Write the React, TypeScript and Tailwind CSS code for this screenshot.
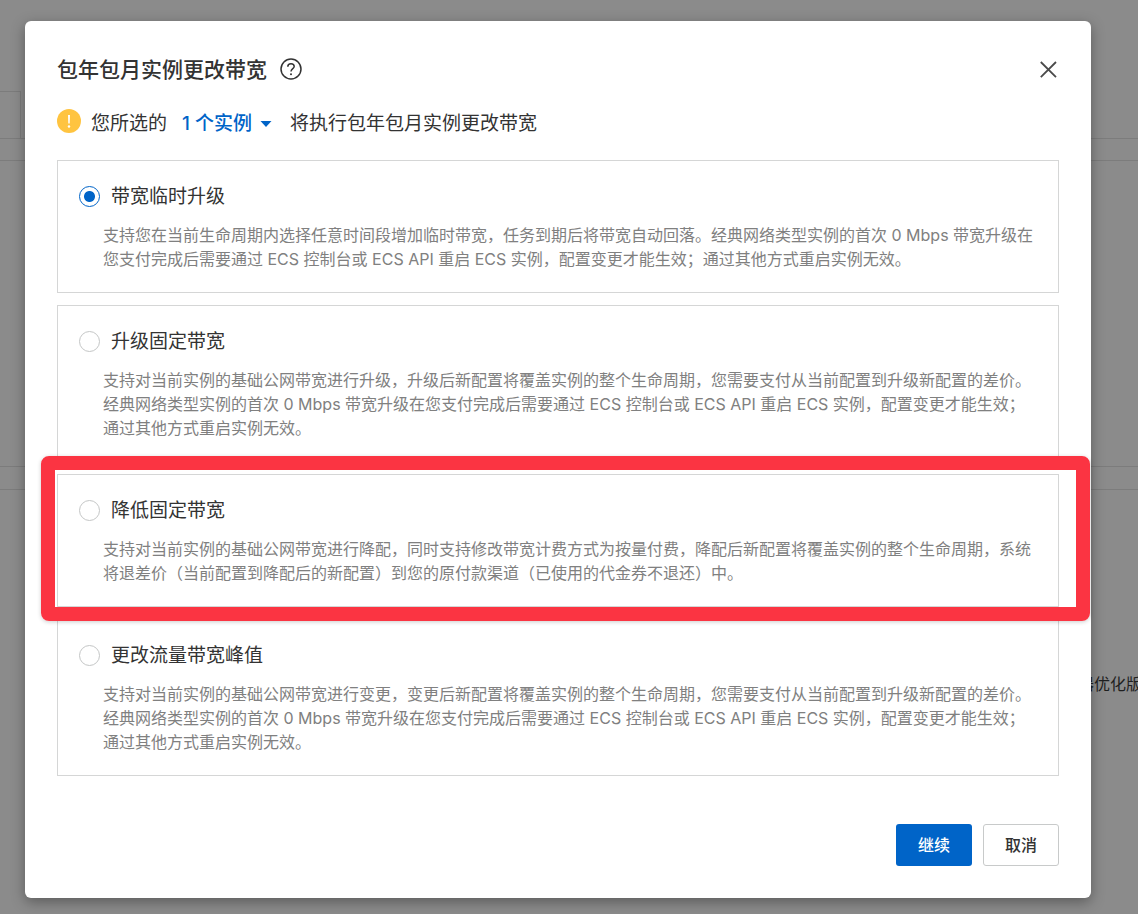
import React, { useState } from "react";

type Option = { id: string; title: string; lines: string[]; highlighted?: boolean };

const options: Option[] = [
  {
    id: "temp",
    title: "带宽临时升级",
    lines: [
      "支持您在当前生命周期内选择任意时间段增加临时带宽，任务到期后将带宽自动回落。经典网络类型实例的首次 0 Mbps 带宽升级在",
      "您支付完成后需要通过 ECS 控制台或 ECS API 重启 ECS 实例，配置变更才能生效；通过其他方式重启实例无效。",
    ],
  },
  {
    id: "upgrade",
    title: "升级固定带宽",
    lines: [
      "支持对当前实例的基础公网带宽进行升级，升级后新配置将覆盖实例的整个生命周期，您需要支付从当前配置到升级新配置的差价。",
      "经典网络类型实例的首次 0 Mbps 带宽升级在您支付完成后需要通过 ECS 控制台或 ECS API 重启 ECS 实例，配置变更才能生效；",
      "通过其他方式重启实例无效。",
    ],
  },
  {
    id: "downgrade",
    title: "降低固定带宽",
    highlighted: true,
    lines: [
      "支持对当前实例的基础公网带宽进行降配，同时支持修改带宽计费方式为按量付费，降配后新配置将覆盖实例的整个生命周期，系统",
      "将退差价（当前配置到降配后的新配置）到您的原付款渠道（已使用的代金券不退还）中。",
    ],
  },
  {
    id: "peak",
    title: "更改流量带宽峰值",
    lines: [
      "支持对当前实例的基础公网带宽进行变更，变更后新配置将覆盖实例的整个生命周期，您需要支付从当前配置到升级新配置的差价。",
      "经典网络类型实例的首次 0 Mbps 带宽升级在您支付完成后需要通过 ECS 控制台或 ECS API 重启 ECS 实例，配置变更才能生效；",
      "通过其他方式重启实例无效。",
    ],
  },
];

function PageBehind() {
  return (
    <div className="absolute inset-0 flex flex-col overflow-hidden bg-[#8b8b8b]" aria-hidden="true">
      <div className="h-[91px]" />
      <div className="h-12 w-[21px] border-y border-r border-[#7c7c7c]" />
      <div className="-mt-px h-[23px] border-y border-[#7c7c7c]" />
      <div className="h-[305px]" />
      <div className="h-6 border-y border-[#7c7c7c]" />
      <div className="mt-[182px] flex justify-end text-base leading-6 text-[#1f1f1f]">
        <span className="-mr-1 whitespace-nowrap">服务器优化版</span>
      </div>
    </div>
  );
}

function OptionCard({ option, checked, onSelect }: { option: Option; checked: boolean; onSelect: () => void }) {
  return (
    <div className="relative border border-[#d5d6d6] px-[21px] py-[21px]">
      <label className="flex h-7 items-center gap-[11px] text-[19px] leading-7 text-[#333]">
        <input
          type="radio"
          name="bandwidth"
          checked={checked}
          onChange={onSelect}
          className="size-[21px] shrink-0 appearance-none rounded-full border border-[#c4c6c6] bg-white checked:border-[#0064c8] checked:bg-[radial-gradient(circle,#0064c8_5px,#fff_6px)]"
        />
        <span className="pt-0.5">{option.title}</span>
      </label>
      <p className="mt-[13px] pl-6 text-base leading-6 text-[#808080]">
        {option.lines.map((line) => (
          <span key={line} className="block whitespace-nowrap">
            {line}
          </span>
        ))}
      </p>
      {option.highlighted && (
        <div className="pointer-events-none absolute -top-[19px] -right-8 -bottom-[15px] -left-[17px] z-10 rounded-lg border-14 border-[#fb3442] shadow-[0_1px_4px_rgba(0,0,0,0.2)]" />
      )}
    </div>
  );
}

export default function App() {
  const [selected, setSelected] = useState("temp");
  return (
    <div className="relative min-h-screen pt-[21px] pr-[47px] pb-4 pl-[25px] font-[Inter,'Noto_Sans_CJK_SC',sans-serif]">
      <PageBehind />
      <div
        role="dialog"
        aria-labelledby="dialog-title"
        className="relative rounded-md bg-white px-8 pt-8 pb-8 shadow-[0_4px_14px_rgba(0,0,0,0.35)]"
      >
        <header className="flex h-8 items-center">
          <h1 id="dialog-title" className="pt-0.5 text-[21px] leading-8 font-medium text-[#333]">
            包年包月实例更改带宽
          </h1>
          <button type="button" aria-label="帮助" className="ml-[13px]">
            <svg viewBox="0 0 22 22" className="size-[22px]" fill="none" stroke="#333" strokeWidth="1.5">
              <circle cx="11" cy="11" r="10" />
              <path d="M7.800 8.700C7.800 6.800 9.200 5.700 11 5.700s3.200 1.100 3.200 2.800c0 2-3.200 2.200-3.200 4.900" />
              <circle cx="11" cy="16.200" r="1" fill="#333" stroke="none" />
            </svg>
          </button>
          <button type="button" aria-label="关闭" className="ml-auto">
            <svg viewBox="0 0 20 20" className="size-5" stroke="#4a4a4a" strokeWidth="1.8">
              <path d="M1.800 3l15.200 15.200M17 3L1.800 18.200" />
            </svg>
          </button>
        </header>

        <div className="mt-6 flex h-7 items-center text-[19px] leading-7 text-[#333]">
          <svg viewBox="0 0 24 24" className="mb-1 size-6">
            <circle cx="12" cy="12" r="12" fill="#ffc440" />
            <path d="M11 6h2l-.3 8.500h-1.400z" fill="#fff" />
            <circle cx="12" cy="17.500" r="1.200" fill="#fff" />
          </svg>
          <span className="ml-[10px] pt-0.5">您所选的</span>
          <button type="button" className="ml-[15px] flex items-center gap-2 pt-0.5 font-medium text-[#0064c8]">
            1 个实例
            <svg viewBox="0 0 12 6" className="h-[6px] w-3" fill="#0064c8">
              <path d="M0.500 0h11L6 6z" />
            </svg>
          </button>
          <span className="ml-[18px] pt-0.5">将执行包年包月实例更改带宽</span>
        </div>

        <div className="mt-[23px] flex flex-col gap-3">
          {options.map((o) => (
            <OptionCard key={o.id} option={o} checked={selected === o.id} onSelect={() => setSelected(o.id)} />
          ))}
        </div>

        <footer className="mt-12 flex justify-end gap-[11px] text-base font-medium">
          <button type="button" className="h-[42px] rounded-[3px] bg-[#0064c8] px-[22px] text-white">
            继续
          </button>
          <button type="button" className="h-[42px] rounded-[3px] border border-[#c8caca] bg-white px-[21px] text-[#333]">
            取消
          </button>
        </footer>
      </div>
    </div>
  );
}
